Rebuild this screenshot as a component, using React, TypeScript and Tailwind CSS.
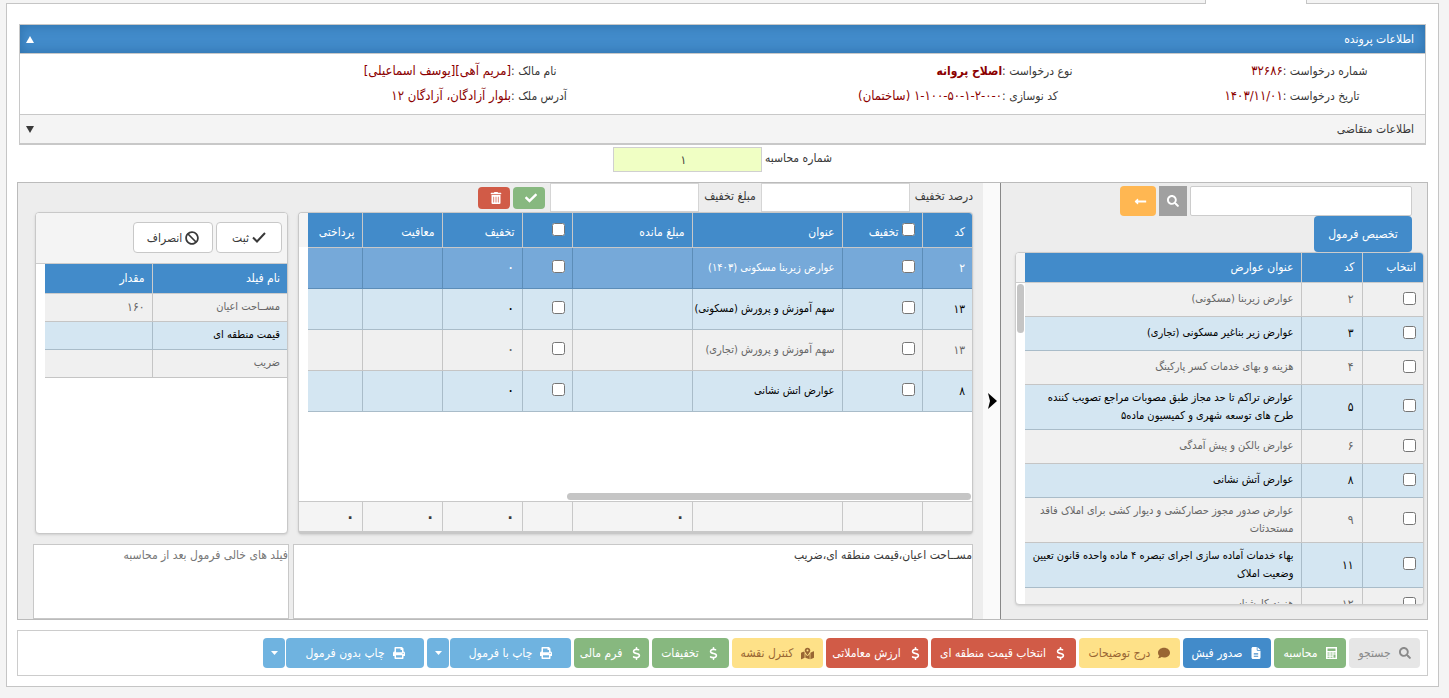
import React from 'react';
import { FaBan, FaCheck, FaComment, FaLongArrowAltLeft, FaMapMarkedAlt, FaPrint, FaSearch, FaTrashAlt } from 'react-icons/fa';
import { FaDollarSign, FaFileLines } from 'react-icons/fa6';

interface Tariff {
  code: string;
  title: string;
  tall?: boolean;
}

interface Charge {
  code: string;
  title: string;
  selected?: boolean;
}

interface Action {
  label: string;
  icon: React.ReactNode;
  className: string;
  split?: boolean;
}

const tariffs: Tariff[] = [
  { code: '۲', title: 'عوارض زیربنا (مسکونی)' },
  { code: '۳', title: 'عوارض زیر بناغیر مسکونی (تجاری)' },
  { code: '۴', title: 'هزینه و بهای خدمات کسر پارکینگ' },
  { code: '۵', title: 'عوارض تراکم تا حد مجاز طبق مصوبات مراجع تصویب کننده طرح های توسعه شهری و کمیسیون ماده۵', tall: true },
  { code: '۶', title: 'عوارض بالکن و پیش آمدگی' },
  { code: '۸', title: 'عوارض آتش نشانی' },
  { code: '۹', title: 'عوارض صدور مجوز حصارکشی و دیوار کشی برای املاک فاقد مستحدثات', tall: true },
  { code: '۱۱', title: 'بهاء خدمات آماده سازی اجرای تبصره ۴ ماده واحده قانون تعیین وضعیت املاک', tall: true },
  { code: '۱۲', title: 'هزینه کارشناسی' },
];

const charges: Charge[] = [
  { code: '۲', title: 'عوارض زیربنا مسکونی (۱۴۰۳)', selected: true },
  { code: '۱۳', title: 'سهم آموزش و پرورش (مسکونی)' },
  { code: '۱۳', title: 'سهم آموزش و پرورش (تجاری)' },
  { code: '۸', title: 'عوارض اتش نشانی' },
];

const fields = [
  { name: 'مســاحت اعیان', value: '۱۶۰' },
  { name: 'قیمت منطقه ای', value: '' },
  { name: 'ضریب', value: '' },
];

const CalculatorIcon = () => (
  <svg width="11" height="12" viewBox="0 0 11 12" fill="currentColor" aria-hidden="true">
    <path
      fillRule="evenodd"
      d="M0 0h11v12H0zM1.500 1.500v2.500h8V1.500zM1.500 5.500v1h2v-1zm3 0v1h2v-1zm3 0v1h2v-1zM1.500 7.500v1h2v-1zm3 0v1h2v-1zm3 0v3.300h2V7.500zM1.500 9.700v1.100h2V9.700zm3 0v1.100h2V9.700z"
    />
  </svg>
);

const actions: Action[] = [
  { label: 'جستجو', icon: <FaSearch size={12} />, className: 'w-[71px] bg-[#e6e6e6] text-[#8a8a8a]' },
  { label: 'محاسبه', icon: <CalculatorIcon />, className: 'w-[72px] bg-[#87b87f] text-white' },
  { label: 'صدور فیش', icon: <FaFileLines size={12} />, className: 'w-[88px] bg-[#428bca] text-white' },
  { label: 'درج توضیحات', icon: <FaComment size={12} />, className: 'w-[101px] bg-[#fee188] text-[#996633]' },
  { label: 'انتخاب قیمت منطقه ای', icon: <FaDollarSign size={13} />, className: 'w-[145px] bg-[#d15b47] text-white' },
  { label: 'ارزش معاملاتی', icon: <FaDollarSign size={13} />, className: 'w-[102px] bg-[#d15b47] text-white' },
  { label: 'کنترل نقشه', icon: <FaMapMarkedAlt size={13} />, className: 'w-[91px] bg-[#fee188] text-[#996633]' },
  { label: 'تخفیفات', icon: <FaDollarSign size={13} />, className: 'w-[77px] bg-[#87b87f] text-white' },
  { label: 'فرم مالی', icon: <FaDollarSign size={13} />, className: 'w-[75px] bg-[#87b87f] text-white' },
  { label: 'چاپ با فرمول', icon: <FaPrint size={12} />, className: 'w-[121px] bg-[#6fb3e0] text-white', split: true },
  { label: 'چاپ بدون فرمول', icon: <FaPrint size={12} />, className: 'w-[138px] bg-[#6fb3e0] text-white', split: true },
];

const rowColor = (index: number) =>
  index % 2 === 1
    ? 'bg-[#d4e6f2] text-black border-[#a9bcc9]'
    : 'bg-[#f0f0f0] text-[#666] border-[#c5c5c5]';

const InfoItem = ({ label, children }: { label: string; children: React.ReactNode }) => (
  <>
    <dt className="text-left whitespace-nowrap">{label} :</dt>
    <dd className="text-right text-[13px] whitespace-nowrap text-[#8b0000]">{children}</dd>
  </>
);

const CaseInfo = () => (
  <section className="mx-3 border border-b-2 border-[#c8c8c8]">
    <button
      type="button"
      className="flex h-7 w-full items-center justify-between bg-[#428bca] px-[11px] text-white shadow-[inset_0_0_10px_2px_#3276b1]"
    >
      اطلاعات پرونده
      <svg width="8" height="7" viewBox="0 0 8 7" fill="currentColor" className="-ml-[5px]" aria-hidden="true">
        <path d="M4 0l4 7H0z" />
      </svg>
    </button>
    <dl className="grid grid-cols-[10%_10%_10%_25%_10%_35%] gap-y-px border-y border-[#c8c8c8] pt-[5px] pr-[2px] pb-[6px] leading-6">
      <InfoItem label="شماره درخواست">۳۲۶۸۶</InfoItem>
      <InfoItem label="نوع درخواست"><b className="text-[12px]">اصلاح پروانه</b></InfoItem>
      <InfoItem label="نام مالک">[مریم آهی][یوسف اسماعیلی]</InfoItem>
      <InfoItem label="تاریخ درخواست"><bdi dir="ltr">۱۴۰۳/۱۱/۰۱</bdi></InfoItem>
      <InfoItem label="کد نوسازی"><bdi dir="ltr">۱-۱۰۰-۵۰-۱-۲-۰-۰</bdi> (ساختمان)</InfoItem>
      <InfoItem label="آدرس ملک">بلوار آزادگان، آزادگان ۱۲</InfoItem>
    </dl>
    <button type="button" className="flex h-7 w-full items-center justify-between bg-[#f4f4f4] px-[11px]">
      اطلاعات متقاضی
      <svg width="8" height="7" viewBox="0 0 8 7" fill="currentColor" className="-ml-[5px]" aria-hidden="true">
        <path d="M4 7L0 0h8z" />
      </svg>
    </button>
  </section>
);

const TariffPanel = () => (
  <aside className="flex w-[427px] shrink-0 flex-col border-l border-[#888] pt-[3px] pr-[3px] pl-[14px]">
    <div className="flex items-start gap-[3px] pr-3">
      <input type="text" aria-label="جستجوی عوارض" className="h-[30px] w-[222px] rounded-xs border border-[#ccc] bg-white px-2 outline-none" />
      <button type="button" aria-label="جستجو" className="flex h-[30px] w-7 items-center justify-center bg-[#a0a0a0] text-white">
        <FaSearch size={12} />
      </button>
      <button type="button" aria-label="بازگشت" className="flex h-[30px] w-9 items-center justify-center rounded bg-[#ffb752] pl-1 text-white">
        <FaLongArrowAltLeft size={13} />
      </button>
    </div>
    <div className="pr-3">
      <button type="button" className="block h-9 w-[98px] rounded bg-[#428bca] text-white">تخصیص فرمول</button>
    </div>
    <div className="relative h-[353px] overflow-hidden rounded border border-[#ccc] bg-white shadow-sm">
      <div className="h-full overflow-hidden pl-[9px]">
        <table className="w-full table-fixed border-collapse text-right">
          <thead>
            <tr className="h-[29px] border-b border-[#ccc] bg-[#428bca] text-white">
              <th className="w-[61px] border-l border-[#ccc] px-[7px] font-normal">انتخاب</th>
              <th className="w-[61px] border-l border-[#ccc] px-[7px] font-normal">کد</th>
              <th className="px-[7px] font-normal">عنوان عوارض</th>
            </tr>
          </thead>
          <tbody>
            {tariffs.map((tariff, index) => (
              <tr key={tariff.code} className={`border-b ${tariff.tall ? 'h-[45px]' : 'h-[34px]'} ${rowColor(index)}`}>
                <td className="border-l border-inherit px-[7px]">
                  <input type="checkbox" aria-label={tariff.title} className="mb-[2px] block size-[13px]" />
                </td>
                <td className="border-l border-inherit px-2">{tariff.code}</td>
                <td className="pr-[7px] text-[11px] leading-[18px]">{tariff.title}</td>
              </tr>
            ))}
          </tbody>
        </table>
      </div>
      <div className="absolute top-0 left-0 h-[30px] w-[9px] border-b border-[#ccc] bg-[#f4f4f4]" />
      <div className="absolute top-[31px] left-px h-[49px] w-[7px] rounded-full bg-[#c5c5c5]" />
    </div>
  </aside>
);

const chargeCols = (
  <colgroup>
    <col className="w-[50px]" />
    <col className="w-20" />
    <col className="w-[150px]" />
    <col className="w-[120px]" />
    <col className="w-[50px]" />
    <col className="w-20" />
    <col className="w-20" />
    <col />
  </colgroup>
);

const Zero = () => <span className="block text-base leading-5">۰</span>;

const ChargesGrid = () => (
  <div className="flex h-[322px] min-w-0 flex-1 flex-col overflow-hidden rounded border border-b-[3px] border-[#c8c8c8] bg-white shadow-sm">
    <div className="bg-[#f4f4f4] bg-[linear-gradient(#fff,#fff)] bg-[length:100%_100%] bg-[position:0_34px] bg-no-repeat pl-[9px]">
      <table className="w-full table-fixed border-collapse text-right">
        {chargeCols}
        <thead>
          <tr className="h-[34px] border-b border-[#c8c8c8] bg-[#428bca] text-white *:border-l *:border-[#c8c8c8] *:px-[7px] *:pt-1 *:font-normal *:last:border-l-0">
            <th>کد</th>
            <th>
              <label className="flex items-center gap-[3px]">
                <input type="checkbox" className="mb-1 size-[13px]" />
                تخفیف
              </label>
            </th>
            <th>عنوان</th>
            <th>مبلغ مانده</th>
            <th><input type="checkbox" aria-label="انتخاب همه" className="mb-1 block size-[13px]" /></th>
            <th>تخفیف</th>
            <th>معافیت</th>
            <th>پرداختی</th>
          </tr>
        </thead>
        <tbody>
          {charges.map((charge, index) => (
            <tr
              key={index}
              className={`h-[41px] border-b *:border-l *:border-inherit *:pr-[7px] *:last:border-l-0 ${
                charge.selected ? 'border-[#5c8db8] bg-[#76a9d9] text-white' : rowColor(index)
              }`}
            >
              <td>{charge.code}</td>
              <td><input type="checkbox" aria-label={`تخفیف ${charge.title}`} className="mb-[3px] block size-[13px]" /></td>
              <td className="text-[11px] whitespace-nowrap">{charge.title}</td>
              <td />
              <td><input type="checkbox" aria-label={`انتخاب ${charge.title}`} className="mb-[3px] block size-[13px]" /></td>
              <td><Zero /></td>
              <td />
              <td />
            </tr>
          ))}
        </tbody>
      </table>
    </div>
    <div className="mt-auto mr-px mb-px h-[7px] w-3/5 shrink-0 rounded-full bg-[#c5c5c5]" />
    <div className="shrink-0 border-t border-[#c8c8c8] bg-[#f4f4f4] pl-[9px]">
      <table className="w-full table-fixed border-collapse text-right">
        {chargeCols}
        <tfoot>
          <tr className="h-[29px] *:border-l *:border-[#c8c8c8] *:pr-[7px] *:font-bold *:last:border-l-0">
            <td />
            <td />
            <td />
            <td><Zero /></td>
            <td />
            <td><Zero /></td>
            <td><Zero /></td>
            <td><Zero /></td>
          </tr>
        </tfoot>
      </table>
    </div>
  </div>
);

const FormulaFields = () => (
  <div className="h-[322px] w-[253px] shrink-0 overflow-hidden rounded border border-[#c8c8c8] bg-white shadow-sm">
    <div className="flex h-[51px] gap-[3px] border-b border-[#ccc] bg-[#f4f4f4] pt-[9px] pr-[5px]">
      <button type="button" className="flex h-[31px] w-[66px] items-center justify-center gap-[3px] rounded border border-[#c8c8c8] bg-white">
        <svg width="14" height="11" viewBox="0 0 14 11" fill="none" stroke="currentColor" strokeWidth="2" aria-hidden="true">
          <path d="M1 5.500L5 9.500L13 1" />
        </svg>
        ثبت
      </button>
      <button type="button" className="flex h-[31px] w-20 items-center justify-center gap-[3px] rounded border border-[#c8c8c8] bg-white">
        <FaBan size={14} />
        انصراف
      </button>
    </div>
    <div className="pl-[9px]">
      <table className="w-full table-fixed border-collapse text-right">
        <thead>
          <tr className="h-[29px] border-b border-[#ccc] bg-[#428bca] text-white">
            <th className="w-[135px] border-l border-[#ccc] px-[7px] font-normal">نام فیلد</th>
            <th className="px-[7px] font-normal">مقدار</th>
          </tr>
        </thead>
        <tbody>
          {fields.map((field, index) => (
            <tr key={field.name} className={`h-7 border-b text-[11px] ${rowColor(index)}`}>
              <td className="border-l border-inherit px-[7px]">{field.name}</td>
              <td className="px-[7px] text-[12px]">{field.value}</td>
            </tr>
          ))}
        </tbody>
      </table>
    </div>
  </div>
);

const DiscountBar = () => (
  <div className="flex h-[29px] items-center gap-[5px]">
    <label htmlFor="percent" className="pb-[3px]">درصد تخفیف</label>
    <input id="percent" type="text" className="h-[29px] w-[149px] border border-[#d5d5d5] bg-white px-2 outline-none" />
    <label htmlFor="amount" className="pb-[3px]">مبلغ تخفیف</label>
    <input id="amount" type="text" className="h-[29px] w-[149px] border border-[#d5d5d5] bg-white px-2 outline-none" />
    <div className="flex gap-[3px]">
      <button type="button" aria-label="تایید" className="flex h-[22px] w-8 items-center justify-center rounded bg-[#87b87f] pl-1 text-white">
        <FaCheck size={12} />
      </button>
      <button type="button" aria-label="حذف" className="flex h-[22px] w-8 items-center justify-center rounded bg-[#d15b47] pl-1 text-white">
        <FaTrashAlt size={12} />
      </button>
    </div>
  </div>
);

const Toolbar = () => (
  <footer className="mx-[10px] mt-[10px] flex h-[46px] items-center gap-[3px] border border-[#ccc] bg-white px-[7px]">
    {actions.map((action) => (
      <div key={action.label} className="flex shrink-0 gap-px">
        <button type="button" className={`flex h-[30px] items-center justify-center gap-2 rounded whitespace-nowrap ${action.className}`}>
          {action.icon}
          {action.label}
        </button>
        {action.split && (
          <button type="button" aria-label={`گزینه های ${action.label}`} className="flex h-[30px] w-[22px] items-center justify-center rounded bg-[#6fb3e0] text-white">
            <svg width="7" height="4" viewBox="0 0 7 4" fill="currentColor" aria-hidden="true">
              <path d="M0 0h7L3.500 4z" />
            </svg>
          </button>
        )}
      </div>
    ))}
  </footer>
);

const App: React.FC = () => {
  return (
    <div
      dir="rtl"
      lang="fa"
      className="min-h-screen bg-[#f4f4f4] pr-[10px] pb-[11px] pl-[6px] font-['DejaVu_Sans_Condensed','DejaVu_Sans',sans-serif] text-[12px] leading-5 text-[#393939]"
    >
      <div className="flex h-[3px] pr-[132px]">
        <div className="relative z-10 h-1 w-[102px] border-x border-[#c5c5c5] bg-white" />
      </div>
      <main className="border border-[#c5c5c5] bg-white pt-5 pb-[10px]">
        <CaseInfo />
        <div className="flex items-center justify-center gap-[3px] pt-[2px]">
          <label htmlFor="calc-number" className="pb-[3px]">شماره محاسبه</label>
          <input
            id="calc-number"
            type="text"
            defaultValue="۱"
            className="h-[25px] w-[149px] border border-[#d0d0d0] bg-[#f0ffc4] pr-2 text-center outline-none"
          />
        </div>
        <div className="mx-[10px] mt-[10px] flex h-[438px] overflow-hidden border border-[#bbb] bg-[#ededed]">
          <TariffPanel />
          <div className="flex w-[17px] shrink-0 items-center bg-[#fafafa]">
            <svg width="9" height="16" viewBox="0 0 9 16" aria-hidden="true" className="mr-[3px]">
              <path d="M0 0L9 8L0 16L2 8z" fill="black" />
            </svg>
          </div>
          <div className="min-w-0 flex-1 pr-[10px] pl-[15px]">
            <DiscountBar />
            <div className="flex gap-[10px] pl-[2px]">
              <ChargesGrid />
              <FormulaFields />
            </div>
            <div className="mt-[10px] flex gap-1">
              <textarea
                aria-label="فیلدهای فرمول"
                defaultValue="مســاحت اعیان،قیمت منطقه ای،ضریب"
                className="h-[75px] min-w-0 flex-1 resize-none border border-[#c8c8c8] bg-white outline-none"
              />
              <textarea
                aria-label="فیلدهای خالی"
                placeholder="فیلد های خالی فرمول بعد از محاسبه"
                className="h-[75px] w-64 shrink-0 resize-none border border-[#c8c8c8] bg-white outline-none placeholder:text-[#777]"
              />
            </div>
          </div>
        </div>
        <Toolbar />
      </main>
    </div>
  );
};

export default App;
